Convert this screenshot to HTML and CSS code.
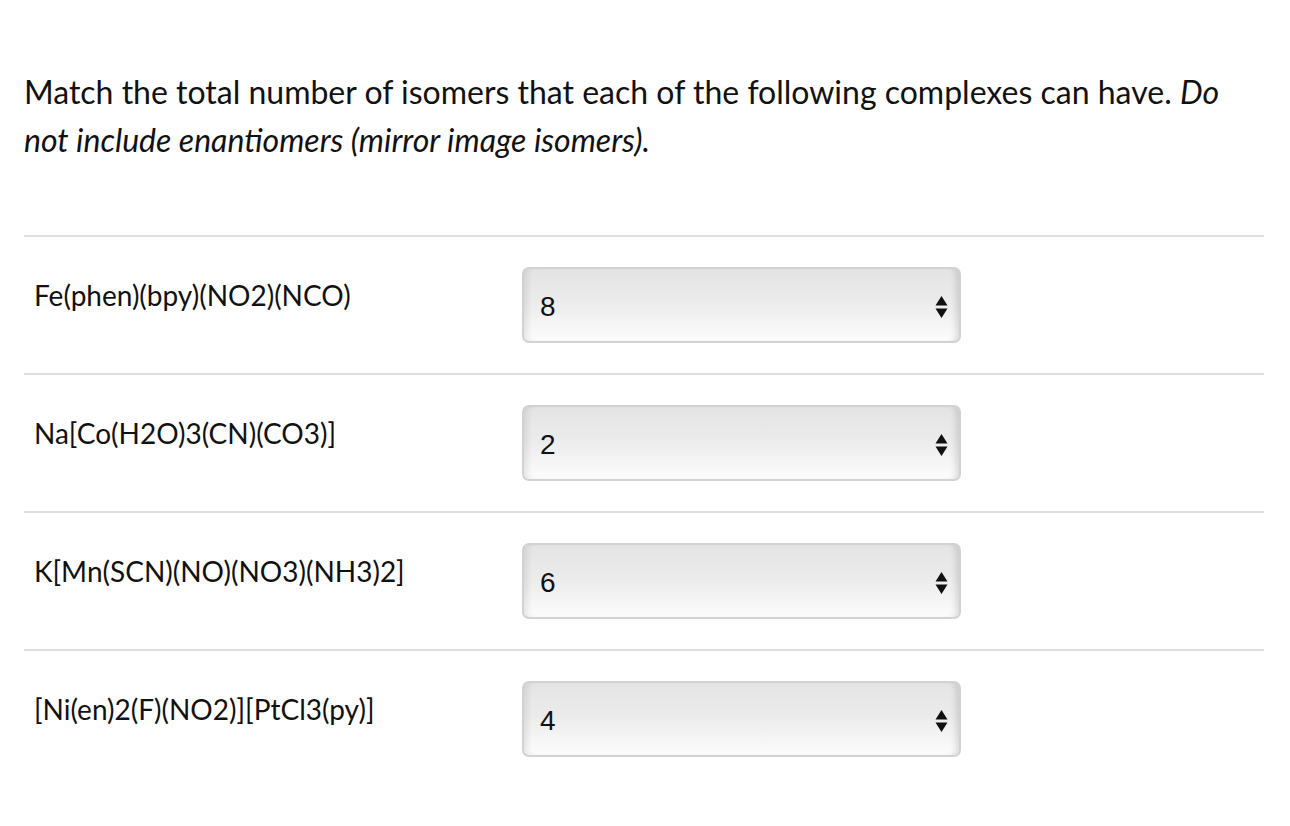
FILE: index.html
```html
<!DOCTYPE html>
<html lang="en">
<head>
    <meta charset="UTF-8">
    <title>Matching question</title>
    <link rel="stylesheet" href="styles.css">
</head>
<body>
    <div class="question">
        <p class="prompt">Match the total number of isomers that each of the following complexes can have. <em>Do not include enantiomers (mirror image isomers).</em></p>

        <div class="match-list">
            <div class="match-row">
                <div class="label">Fe(phen)(bpy)(NO2)(NCO)</div>
                <div class="select"><span>8</span><svg class="arrows" width="13" height="24" viewBox="0 0 13 24"><path d="M6.5 1 L12.5 10.5 L0.5 10.5 Z M0.5 13.5 L12.5 13.5 L6.5 23 Z" fill="#111"/></svg></div>
            </div>
            <div class="match-row">
                <div class="label">Na[Co(H2O)3(CN)(CO3)]</div>
                <div class="select"><span>2</span><svg class="arrows" width="13" height="24" viewBox="0 0 13 24"><path d="M6.5 1 L12.5 10.5 L0.5 10.5 Z M0.5 13.5 L12.5 13.5 L6.5 23 Z" fill="#111"/></svg></div>
            </div>
            <div class="match-row">
                <div class="label">K[Mn(SCN)(NO)(NO3)(NH3)2]</div>
                <div class="select"><span>6</span><svg class="arrows" width="13" height="24" viewBox="0 0 13 24"><path d="M6.5 1 L12.5 10.5 L0.5 10.5 Z M0.5 13.5 L12.5 13.5 L6.5 23 Z" fill="#111"/></svg></div>
            </div>
            <div class="match-row">
                <div class="label">[Ni(en)2(F)(NO2)][PtCl3(py)]</div>
                <div class="select"><span>4</span><svg class="arrows" width="13" height="24" viewBox="0 0 13 24"><path d="M6.5 1 L12.5 10.5 L0.5 10.5 Z M0.5 13.5 L12.5 13.5 L6.5 23 Z" fill="#111"/></svg></div>
            </div>
        </div>
    </div>
</body>
</html>
```

FILE: styles.css
```css
/* Page */
body {
    margin: 0;
    padding: 0;
    background: #ffffff;
    color: #111111;
    font-family: 'Lato', sans-serif;
}

.question {
    padding: 68px 26px 0 24px;
}

.prompt {
    margin: 0;
    font-size: 32px;
    line-height: 48px;
}

.match-list {
    margin-top: 71px;
}

.match-row {
    display: flex;
    align-items: flex-start;
    border-top: 2px solid #dedede;
    padding: 30px 0 30px 0;
}

.label {
    width: 488px;
    padding: 11px 0 0 10px;
    font-size: 28px;
    line-height: 34px;
}

.select {
    display: flex;
    align-items: center;
    justify-content: space-between;
    box-sizing: border-box;
    width: 439px;
    height: 76px;
    padding: 0 11px 0 16px;
    border: 2px solid #d2d2d2;
    border-radius: 7px;
    background: linear-gradient(180deg, #e4e4e4 0%, #ebebeb 45%, #fcfcfc 100%);
    box-shadow: inset -7px 0 6px -4px rgba(0, 0, 0, 0.13), inset 7px 0 6px -4px rgba(0, 0, 0, 0.09);
    font-family: 'Liberation Sans', Arial, sans-serif;
    font-size: 28px;
}

.select span {
    padding-top: 4px;
}

.arrows {
    margin-top: 3px;
}
```
